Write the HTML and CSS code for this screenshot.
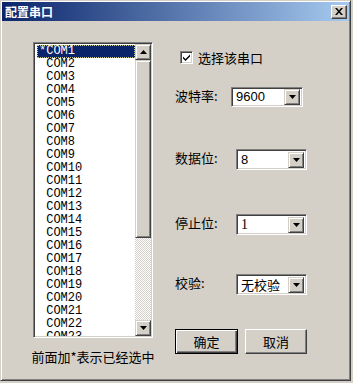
FILE: index.html
```html
<!DOCTYPE html>
<html lang="zh">
<head>
	<meta charset="UTF-8">
	<title>配置串口</title>
	<link rel="stylesheet" href="styles.css">
</head>
<body>
	<div class="window">
		<div class="titlebar">
			<span class="title">配置串口</span>
			<span class="close">
				<svg width="8" height="7" viewBox="0 0 8 7"><path d="M0 0h2l2 2.5 2-2.5h2l-3 3.5 3 3.5h-2l-2-2.5-2 2.5h-2l3-3.5z" fill="#000"/></svg>
			</span>
		</div>
		<div class="content">
			<div class="left">
				<div class="listbox">
					<ul class="items">
						<li class="selected">*COM1</li>
						<li> COM2</li>
						<li> COM3</li>
						<li> COM4</li>
						<li> COM5</li>
						<li> COM6</li>
						<li> COM7</li>
						<li> COM8</li>
						<li> COM9</li>
						<li> COM10</li>
						<li> COM11</li>
						<li> COM12</li>
						<li> COM13</li>
						<li> COM14</li>
						<li> COM15</li>
						<li> COM16</li>
						<li> COM17</li>
						<li> COM18</li>
						<li> COM19</li>
						<li> COM20</li>
						<li> COM21</li>
						<li> COM22</li>
						<li> COM23</li>
					</ul>
					<div class="scrollbar">
						<span class="sbtn"><svg width="7" height="4" viewBox="0 0 7 4"><path d="M3.5 0L7 4H0z" fill="#000"/></svg></span>
						<span class="thumb"></span>
						<span class="track"></span>
						<span class="sbtn"><svg width="7" height="4" viewBox="0 0 7 4"><path d="M0 0h7L3.5 4z" fill="#000"/></svg></span>
					</div>
				</div>
				<p class="hint">前面加*表示已经选中</p>
			</div>
			<div class="right">
				<label class="check-row">
					<span class="checkbox">
						<svg width="9" height="9" viewBox="0 0 9 9"><path d="M1 3.5l2.5 2.5 4.5-4.5v2l-4.5 4.5-2.5-2.5z" fill="#000"/></svg>
					</span>
					<span>选择该串口</span>
				</label>
				<div class="row row-baud">
					<span class="label">波特率:</span>
					<div class="combo combo-baud">
						<span class="value sans">9600</span>
						<span class="dbtn"><svg width="7" height="4" viewBox="0 0 7 4"><path d="M0 0h7L3.5 4z" fill="#000"/></svg></span>
					</div>
				</div>
				<div class="row row-data">
					<span class="label">数据位:</span>
					<div class="combo">
						<span class="value sans">8</span>
						<span class="dbtn"><svg width="7" height="4" viewBox="0 0 7 4"><path d="M0 0h7L3.5 4z" fill="#000"/></svg></span>
					</div>
				</div>
				<div class="row row-stop">
					<span class="label">停止位:</span>
					<div class="combo">
						<span class="value serif">1</span>
						<span class="dbtn"><svg width="7" height="4" viewBox="0 0 7 4"><path d="M0 0h7L3.5 4z" fill="#000"/></svg></span>
					</div>
				</div>
				<div class="row row-parity">
					<span class="label">校验:</span>
					<div class="combo">
						<span class="value">无校验</span>
						<span class="dbtn"><svg width="7" height="4" viewBox="0 0 7 4"><path d="M0 0h7L3.5 4z" fill="#000"/></svg></span>
					</div>
				</div>
				<div class="buttons">
					<button class="btn default">确定</button>
					<button class="btn">取消</button>
				</div>
			</div>
		</div>
	</div>
</body>
</html>
```
FILE: styles.css
```css
*{
	margin: 0;
	padding: 0;
	box-sizing: border-box;
}
ul{
	list-style: none;
}
body{
	background: #d4d0c8;
	font-family: "Noto Sans CJK SC", "Liberation Sans", sans-serif;
	font-size: 13px;
	color: #000;
}
.window{
	width: 351px;
	height: 381px;
	padding: 1px;
	background: #d4d0c8;
	border: 1px solid;
	border-color: #d4d0c8 #404040 #404040 #d4d0c8;
	box-shadow: inset 1px 1px #fff, inset -1px -1px #808080;
}
.titlebar{
	height: 19px;
	display: flex;
	align-items: center;
	justify-content: space-between;
	padding: 0 2px 0 3px;
	background: linear-gradient(to right, #0a246a, #a6caf0);
}
.title{
	color: #fff;
	font-weight: bold;
	font-size: 12px;
	line-height: 19px;
}
.close{
	width: 16px;
	height: 14px;
	display: flex;
	align-items: center;
	justify-content: center;
	background: #d4d0c8;
	border: 1px solid;
	border-color: #fff #404040 #404040 #fff;
	box-shadow: inset -1px -1px #808080;
}
.content{
	display: flex;
	padding-left: 31px;
}
.left{
	width: 120px;
	margin-top: 21px;
	display: flex;
	flex-direction: column;
	align-items: center;
}
.listbox{
	width: 120px;
	height: 296px;
	display: flex;
	padding: 1px;
	background: #fff;
	border: 1px solid;
	border-color: #808080 #fff #fff #808080;
	box-shadow: inset 1px 1px #404040, inset -1px -1px #d4d0c8;
}
.items{
	flex: 1;
	overflow: hidden;
	padding: 1px 0 0 2px;
	font-family: "Liberation Mono", monospace;
	font-size: 12px;
}
.items li{
	height: 13px;
	line-height: 13px;
	padding-left: 2px;
	white-space: pre;
}
.items .selected{
	background: #0a246a;
	color: #fff;
	outline: 1px dotted #c8c890;
	outline-offset: -1px;
}
.scrollbar{
	width: 16px;
	display: flex;
	flex-direction: column;
}
.sbtn,
.dbtn{
	width: 16px;
	height: 16px;
	flex: none;
	display: flex;
	align-items: center;
	justify-content: center;
	background: #d4d0c8;
	border: 1px solid;
	border-color: #d4d0c8 #404040 #404040 #d4d0c8;
	box-shadow: inset 1px 1px #fff, inset -1px -1px #808080;
}
.thumb{
	height: 178px;
	flex: none;
	background: #d4d0c8;
	border: 1px solid;
	border-color: #d4d0c8 #404040 #404040 #d4d0c8;
	box-shadow: inset 1px 1px #fff, inset -1px -1px #808080;
}
.track{
	flex: 1;
	background: repeating-conic-gradient(#d4d0c8 0 25%, #fff 0 50%) 0 0/2px 2px;
}
.hint{
	margin-top: 10px;
	line-height: 18px;
	white-space: nowrap;
}
.right{
	margin-left: 22px;
	margin-top: 28px;
	display: flex;
	flex-direction: column;
}
.check-row{
	height: 16px;
	display: flex;
	align-items: center;
	gap: 5px;
	margin-left: 5px;
}
.checkbox{
	width: 13px;
	height: 13px;
	display: flex;
	align-items: center;
	justify-content: center;
	background: #fff;
	border: 1px solid;
	border-color: #808080 #fff #fff #808080;
	box-shadow: inset 1px 1px #404040, inset -1px -1px #d4d0c8;
}
.row{
	display: flex;
	align-items: flex-start;
}
.label{
	width: 61px;
	line-height: 16px;
	padding-top: 1px;
	white-space: nowrap;
}
.row-baud{
	margin-top: 22px;
}
.row-baud .label{
	width: 56px;
}
.row-data{
	margin-top: 42px;
}
.row-stop{
	margin-top: 44px;
}
.row-parity{
	margin-top: 39px;
}
.combo{
	width: 71px;
	height: 21px;
	display: flex;
	align-items: center;
	padding: 2px;
	background: #fff;
	border: 1px solid;
	border-color: #808080 #fff #fff #808080;
	box-shadow: inset 1px 1px #404040, inset -1px -1px #d4d0c8;
}
.combo-baud{
	width: 72px;
	height: 20px;
}
.value{
	flex: 1;
	padding-left: 2px;
	line-height: 16px;
}
.sans{
	font-family: "Liberation Sans", sans-serif;
	font-size: 13px;
}
.serif{
	font-family: "Liberation Serif", serif;
	font-size: 14px;
}
.buttons{
	margin-top: 34px;
	display: flex;
	gap: 7px;
}
.btn{
	width: 62px;
	height: 25px;
	font-family: "Noto Sans CJK SC", sans-serif;
	font-size: 13px;
	background: #d4d0c8;
	border: 1px solid;
	border-color: #fff #404040 #404040 #fff;
	box-shadow: inset -1px -1px #808080;
}
.btn.default{
	width: 63px;
	border-color: #000;
	box-shadow: inset 1px 1px #fff, inset -1px -1px #404040, inset -2px -2px #808080;
}
```
